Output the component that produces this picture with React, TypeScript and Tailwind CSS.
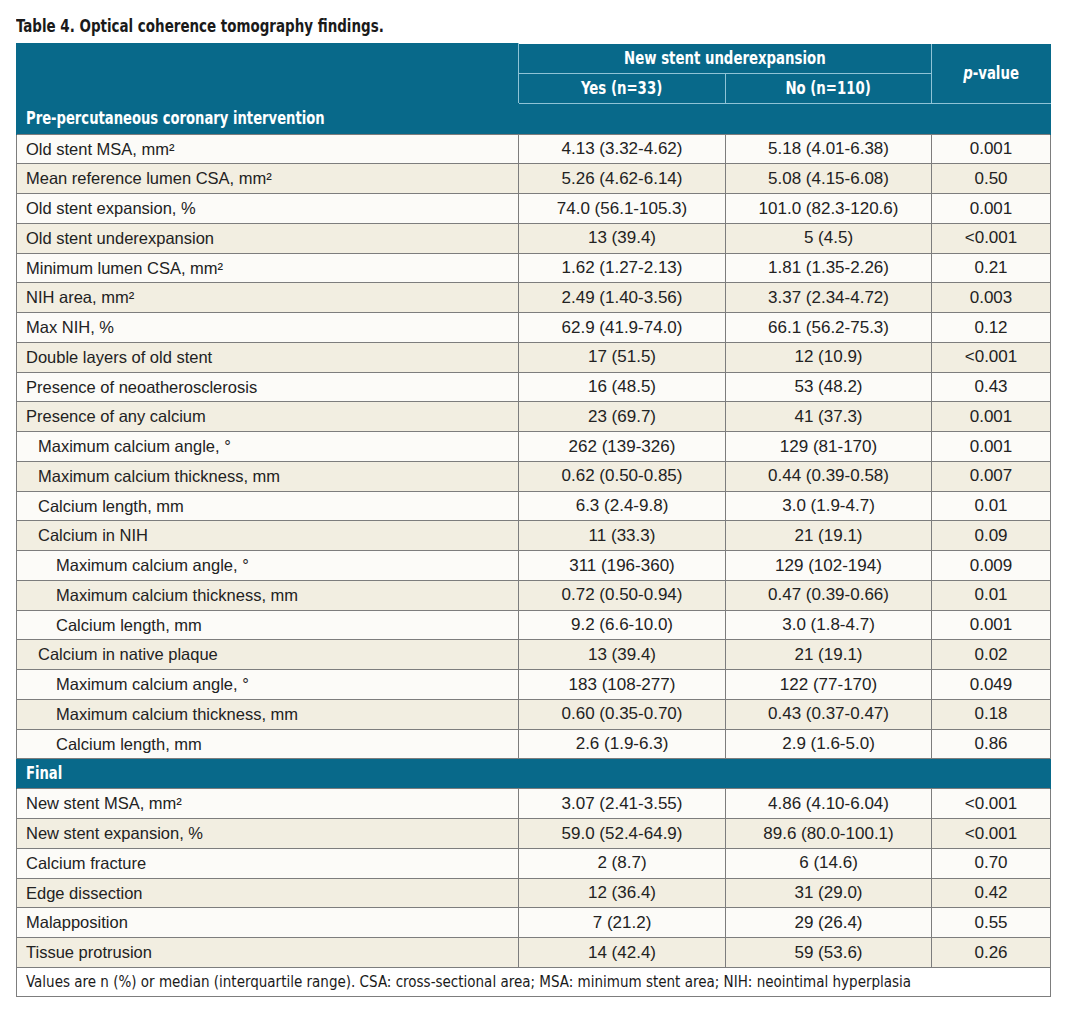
import { Fragment } from 'react'

type Row = { label: string; yes: string; no: string; p: string; level?: number }

const pre: Row[] = [
  { label: 'Old stent MSA, mm²', yes: '4.13 (3.32-4.62)', no: '5.18 (4.01-6.38)', p: '0.001' },
  { label: 'Mean reference lumen CSA, mm²', yes: '5.26 (4.62-6.14)', no: '5.08 (4.15-6.08)', p: '0.50' },
  { label: 'Old stent expansion, %', yes: '74.0 (56.1-105.3)', no: '101.0 (82.3-120.6)', p: '0.001' },
  { label: 'Old stent underexpansion', yes: '13 (39.4)', no: '5 (4.5)', p: '<0.001' },
  { label: 'Minimum lumen CSA, mm²', yes: '1.62 (1.27-2.13)', no: '1.81 (1.35-2.26)', p: '0.21' },
  { label: 'NIH area, mm²', yes: '2.49 (1.40-3.56)', no: '3.37 (2.34-4.72)', p: '0.003' },
  { label: 'Max NIH, %', yes: '62.9 (41.9-74.0)', no: '66.1 (56.2-75.3)', p: '0.12' },
  { label: 'Double layers of old stent', yes: '17 (51.5)', no: '12 (10.9)', p: '<0.001' },
  { label: 'Presence of neoatherosclerosis', yes: '16 (48.5)', no: '53 (48.2)', p: '0.43' },
  { label: 'Presence of any calcium', yes: '23 (69.7)', no: '41 (37.3)', p: '0.001' },
  { label: 'Maximum calcium angle, °', yes: '262 (139-326)', no: '129 (81-170)', p: '0.001', level: 1 },
  { label: 'Maximum calcium thickness, mm', yes: '0.62 (0.50-0.85)', no: '0.44 (0.39-0.58)', p: '0.007', level: 1 },
  { label: 'Calcium length, mm', yes: '6.3 (2.4-9.8)', no: '3.0 (1.9-4.7)', p: '0.01', level: 1 },
  { label: 'Calcium in NIH', yes: '11 (33.3)', no: '21 (19.1)', p: '0.09', level: 1 },
  { label: 'Maximum calcium angle, °', yes: '311 (196-360)', no: '129 (102-194)', p: '0.009', level: 2 },
  { label: 'Maximum calcium thickness, mm', yes: '0.72 (0.50-0.94)', no: '0.47 (0.39-0.66)', p: '0.01', level: 2 },
  { label: 'Calcium length, mm', yes: '9.2 (6.6-10.0)', no: '3.0 (1.8-4.7)', p: '0.001', level: 2 },
  { label: 'Calcium in native plaque', yes: '13 (39.4)', no: '21 (19.1)', p: '0.02', level: 1 },
  { label: 'Maximum calcium angle, °', yes: '183 (108-277)', no: '122 (77-170)', p: '0.049', level: 2 },
  { label: 'Maximum calcium thickness, mm', yes: '0.60 (0.35-0.70)', no: '0.43 (0.37-0.47)', p: '0.18', level: 2 },
  { label: 'Calcium length, mm', yes: '2.6 (1.9-6.3)', no: '2.9 (1.6-5.0)', p: '0.86', level: 2 },
]

const final: Row[] = [
  { label: 'New stent MSA, mm²', yes: '3.07 (2.41-3.55)', no: '4.86 (4.10-6.04)', p: '<0.001' },
  { label: 'New stent expansion, %', yes: '59.0 (52.4-64.9)', no: '89.6 (80.0-100.1)', p: '<0.001' },
  { label: 'Calcium fracture', yes: '2 (8.7)', no: '6 (14.6)', p: '0.70' },
  { label: 'Edge dissection', yes: '12 (36.4)', no: '31 (29.0)', p: '0.42' },
  { label: 'Malapposition', yes: '7 (21.2)', no: '29 (26.4)', p: '0.55' },
  { label: 'Tissue protrusion', yes: '14 (42.4)', no: '59 (53.6)', p: '0.26' },
]

// narrow display face for the headings
const condensed = { fontFamily: '"DejaVu Sans Condensed", "Liberation Sans", sans-serif' }

const indent = ['pl-[9px]', 'pl-[21px]', 'pl-[39px]']

function Body({ rows }: { rows: Row[] }) {
  return (
    <>
      {rows.map((r, i) => (
        <tr key={i} className={i % 2 === 0 ? 'h-[29.76px] bg-[#fcfbf8]' : 'h-[29.76px] bg-[#f2eee1]'}>
          <td className={`border border-[#7d7d7d] ${indent[r.level ?? 0]} text-left text-[16.5px]`}>{r.label}</td>
          <td className="border border-[#7d7d7d] text-center">{r.yes}</td>
          <td className="border border-[#7d7d7d] text-center">{r.no}</td>
          <td className="border border-[#7d7d7d] text-center">{r.p}</td>
        </tr>
      ))}
    </>
  )
}

function Section({ title }: { title: string }) {
  return (
    <tr className="h-[30px] bg-[#08698a]">
      <td colSpan={4} className="border-x border-[#08698a] pl-[9px] text-white">
        <span className="inline-block origin-left scale-x-[0.86] text-[17px] font-bold" style={condensed}>
          {title}
        </span>
      </td>
    </tr>
  )
}

export default function App() {
  return (
    <div className="min-h-[1016px] bg-white px-4 pt-[14px] text-[#222]" style={{ fontFamily: '"Liberation Sans", Arial, sans-serif' }}>
      <h1 className="mb-[5px] h-[24px] text-[#1a1a1a]">
        <span className="inline-block origin-left scale-x-[0.83] text-[18px] font-bold leading-[24px] whitespace-nowrap" style={condensed}>
          Table 4. Optical coherence tomography findings.
        </span>
      </h1>
      <table className="w-[1034px] table-fixed border-collapse text-[17px]">
        <colgroup>
          <col className="w-[502px]" />
          <col className="w-[207px]" />
          <col className="w-[206px]" />
          <col className="w-[119px]" />
        </colgroup>
        <thead className="bg-[#08698a] text-white">
          <tr className="h-[30px]">
            <th rowSpan={2} className="border-y border-l border-[#08698a] border-r border-r-[#8fc3d6]"></th>
            <th colSpan={2} className="border-b border-[#8fc3d6] border-t-[#08698a]">
              <span className="inline-block scale-x-[0.87] text-[17px] font-bold" style={condensed}>New stent underexpansion</span>
            </th>
            <th rowSpan={2} className="border-l border-[#8fc3d6] border-r-[#08698a] border-t-[#08698a]">
              <span className="inline-block scale-x-[0.87] text-[17px] font-bold" style={condensed}>
                <i>p</i>-value
              </span>
            </th>
          </tr>
          <tr className="h-[30px]">
            <th className="border-r border-[#8fc3d6]">
              <span className="inline-block scale-x-[0.87] text-[17px] font-bold" style={condensed}>Yes (n=33)</span>
            </th>
            <th className="border-r border-[#8fc3d6]">
              <span className="inline-block scale-x-[0.87] text-[17px] font-bold" style={condensed}>No (n=110)</span>
            </th>
          </tr>
        </thead>
        <tbody>
          <Fragment>
            <tr className="h-0">
              <td colSpan={4} className="h-0 border-t border-[#8fc3d6] p-0"></td>
            </tr>
            <Section title="Pre-percutaneous coronary intervention" />
            <Body rows={pre} />
            <Section title="Final" />
            <Body rows={final} />
            <tr className="h-[29px] bg-white">
              <td colSpan={4} className="border border-[#7d7d7d] pl-[9px] text-[15px] text-[#1a1a1a]" style={condensed}>
                Values are n (%) or median (interquartile range). CSA: cross-sectional area; MSA: minimum stent area; NIH: neointimal hyperplasia
              </td>
            </tr>
          </Fragment>
        </tbody>
      </table>
    </div>
  )
}
